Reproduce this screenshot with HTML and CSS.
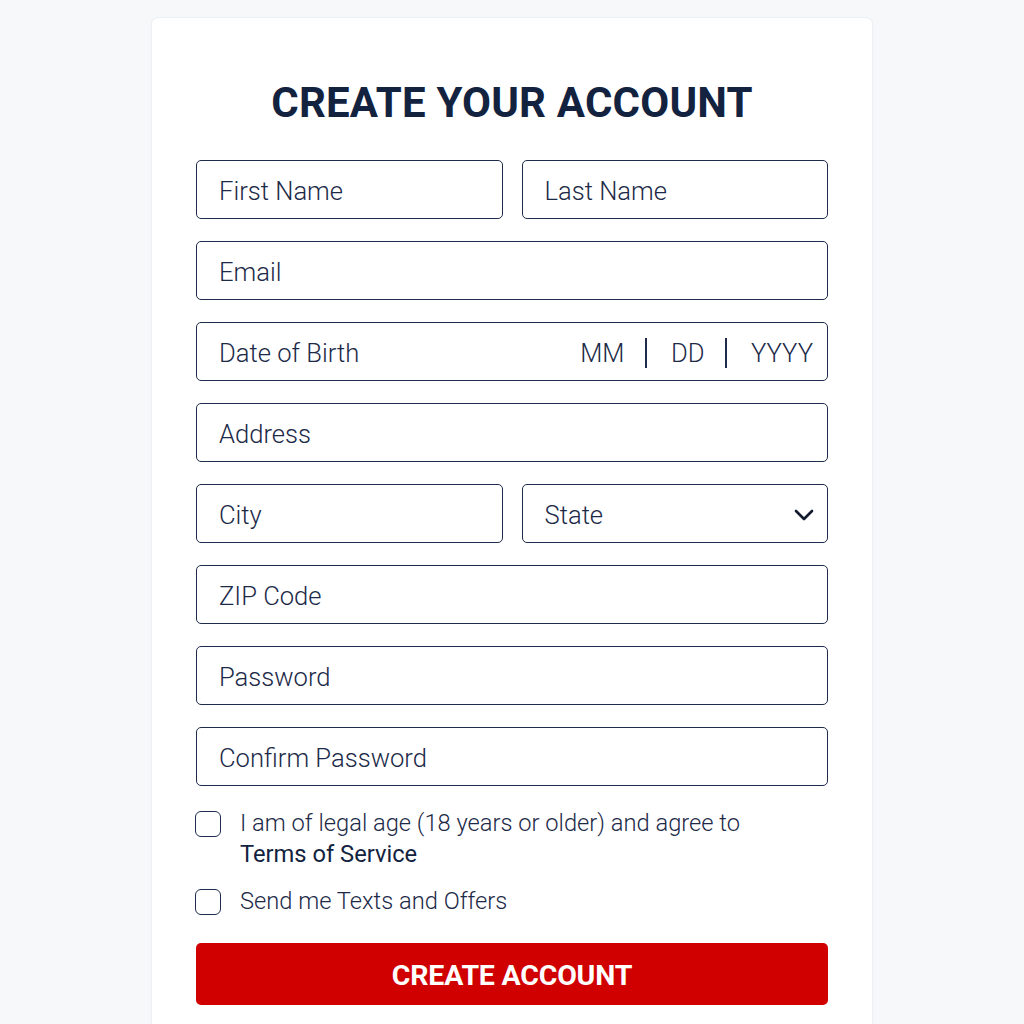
FILE: index.html
```html
<!DOCTYPE html>
<html lang="en">
<head>
  <meta charset="UTF-8" />
  <meta name="viewport" content="width=device-width, initial-scale=1" />
  <title>Create Your Account</title>
  <link rel="stylesheet" href="styles.css">
</head>
<body>
  <div class="card">
    <h1>CREATE YOUR ACCOUNT</h1>
    <form id="signupForm" class="form">
      <div class="row two">
        <input class="field" type="text" placeholder="First Name" />
        <input class="field" type="text" placeholder="Last Name" />
      </div>
      <input class="field" type="email" placeholder="Email" />
      <div class="field dob">
        <span class="dob-label">Date of Birth</span>
        <span class="dob-part">MM</span>
        <span class="sep"></span>
        <span class="dob-part">DD</span>
        <span class="sep"></span>
        <span class="dob-part">YYYY</span>
      </div>
      <input class="field" type="text" placeholder="Address" />
      <div class="row two">
        <input class="field" type="text" placeholder="City" />
        <div class="field select">
          <span>State</span>
          <svg width="22" height="14" viewBox="0 0 22 14"><path d="M3 3l8 8 8-8" fill="none" stroke="#111a2e" stroke-width="2.6" stroke-linecap="round" stroke-linejoin="round"/></svg>
        </div>
      </div>
      <input class="field" type="text" placeholder="ZIP Code" />
      <input class="field" type="password" placeholder="Password" />
      <input class="field" type="password" placeholder="Confirm Password" />

      <label class="check first">
        <span class="box"></span>
        <span>I am of legal age (18 years or older) and agree to<br><strong>Terms of Service</strong></span>
      </label>
      <label class="check">
        <span class="box"></span>
        <span>Send me Texts and Offers</span>
      </label>

      <button type="submit">CREATE ACCOUNT</button>
    </form>
  </div>
</body>
</html>
```

FILE: styles.css
```css
body {
  margin: 0;
  background-color: #f6f8fa;
  font-family: Roboto, "Noto Sans", sans-serif;
  color: #1c2a48;
}
.card {
  width: 632px;
  margin: 17px auto 0;
  padding: 60px 44px 40px;
  background: #fff;
  border: 1px solid #eceff3;
  border-radius: 7px;
  box-shadow: 0 1px 3px rgba(20, 30, 50, 0.04);
}
h1 {
  margin: 0 0 32px;
  text-align: center;
  font-size: 42px;
  line-height: 50px;
  font-weight: 700;
  letter-spacing: 0.2px;
  color: #13233f;
}
.form {
  display: flex;
  flex-direction: column;
  gap: 22px;
}
.row.two {
  display: grid;
  grid-template-columns: 1fr 1fr;
  gap: 19px;
}
.field {
  box-sizing: border-box;
  width: 100%;
  height: 59px;
  padding: 2px 22px 0;
  border: 1.5px solid #1e2b4a;
  border-radius: 5px;
  background: #fff;
  font-family: inherit;
  font-size: 25.6px;
  font-weight: 300;
  color: #1c2a48;
  outline: none;
}
.field::placeholder {
  color: #1c2a48;
  opacity: 1;
}
.dob, .select {
  display: flex;
  align-items: center;
}
.dob {
  padding-right: 14px;
}
.dob-label {
  flex: 1;
}
.sep {
  width: 1.5px;
  height: 30px;
  background: #1e2b4a;
  margin: 0 24px 0 21px;
}
.select {
  justify-content: space-between;
  padding-right: 12px;
}
.check {
  display: flex;
  align-items: flex-start;
  gap: 19px;
  font-size: 23.7px;
  font-weight: 300;
  line-height: 31px;
  color: #1c2a48;
}
.check + .check {
  margin-top: -6px;
}
.check strong {
  font-weight: 400;
  color: #13233f;
}
.box {
  flex: none;
  width: 26px;
  height: 26px;
  box-sizing: border-box;
  border: 1.5px solid #1e2b4a;
  border-radius: 6px;
  margin-top: 3px;
  margin-left: -1px;
}
button {
  height: 62px;
  margin-top: 4px;
  padding-top: 3px;
  border: none;
  border-radius: 5px;
  background-color: #d10000;
  color: #fff;
  font-family: Roboto, "Liberation Sans", sans-serif;
  font-size: 28.5px;
  font-weight: 700;
  letter-spacing: -0.2px;
  cursor: pointer;
}
```
